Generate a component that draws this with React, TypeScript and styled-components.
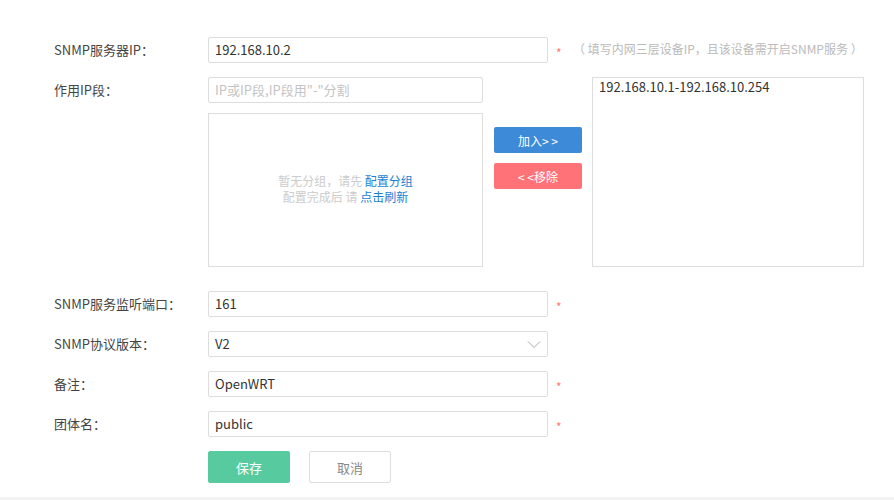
import React from 'react';
import styled, { createGlobalStyle } from 'styled-components';

const GlobalStyle = createGlobalStyle`
    html, body {
        margin: 0;
        padding: 0;
        background: #f2f2f3;
    }
    body {
        font-family: "Noto Sans CJK SC", "Noto Sans", "Liberation Sans", sans-serif;
        font-size: 13px;
        color: #333;
    }
`;

const Page = styled.div`
    height: 497px;
    box-sizing: border-box;
    background: #fff;
    padding: 37px 0 0 54px;
`;

const Row = styled.div<{ gap?: number }>`
    display: flex;
    align-items: flex-start;
    margin-bottom: ${({ gap }) => (gap === undefined ? 14 : gap)}px;
`;

const Label = styled.div`
    width: 154px;
    flex: none;
    height: 26px;
    line-height: 26px;
    color: #444;
    font-size: 13px;
`;

const Input = styled.div<{ width?: number; placeholder?: boolean }>`
    position: relative;
    box-sizing: border-box;
    width: ${({ width }) => width || 340}px;
    height: 26px;
    line-height: 24px;
    border: 1px solid #ddd;
    border-radius: 2px;
    padding: 0 6px;
    font-size: 13px;
    color: ${({ placeholder }) => (placeholder ? '#c4c4c4' : '#333')};
    background: #fff;
`;

const Required = styled.span`
    width: 17px;
    margin-left: 8px;
    height: 26px;
    line-height: 32px;
    color: #f77;
    font-size: 12px;
`;

const Hint = styled.span`
    height: 26px;
    line-height: 24px;
    color: #bbb;
    font-size: 12px;
`;

const Chevron = styled.svg`
    position: absolute;
    right: 6px;
    top: 8px;
`;

const IpSection = styled.div`
    display: flex;
`;

const LeftColumn = styled.div`
    display: flex;
    flex-direction: column;
    gap: 10px;
`;

const GroupBox = styled.div`
    box-sizing: border-box;
    width: 275px;
    height: 154px;
    border: 1px solid #ddd;
    display: flex;
    flex-direction: column;
    align-items: center;
    justify-content: center;
    font-size: 12px;
    line-height: 16px;
    color: #ccc;
    padding-bottom: 2px;
`;

const Link = styled.a`
    color: #1a7fd2;
    text-decoration: none;
    cursor: pointer;
`;

const MoveButtons = styled.div`
    display: flex;
    flex-direction: column;
    gap: 10px;
    padding: 50px 10px 0 11px;
`;

const SmallButton = styled.button<{ color: string }>`
    width: 88px;
    height: 26px;
    border: none;
    border-radius: 2px;
    background: ${({ color }) => color};
    color: #fff;
    font-family: inherit;
    font-size: 12px;
    padding: 0;
    cursor: pointer;
`;

const ListBox = styled.div`
    box-sizing: border-box;
    width: 272px;
    height: 190px;
    border: 1px solid #ddd;
    padding: 0 6px;
    font-size: 13px;
    line-height: 18px;
    color: #333;
`;

const ActionButton = styled.button<{ primary?: boolean }>`
    box-sizing: border-box;
    width: 82px;
    height: 32px;
    margin-right: 19px;
    border-radius: 2px;
    border: 1px solid ${({ primary }) => (primary ? '#57cb9f' : '#ddd')};
    background: ${({ primary }) => (primary ? '#57cb9f' : '#fff')};
    color: ${({ primary }) => (primary ? '#fff' : '#888')};
    font-family: inherit;
    font-size: 13px;
    cursor: pointer;
`;

const Spacer = styled.div`
    width: 154px;
    flex: none;
`;

export default function App() {
    return (
        <>
            <GlobalStyle />
            <Page>
                <Row>
                    <Label>SNMP服务器IP：</Label>
                    <Input>192.168.10.2</Input>
                    <Required>*</Required>
                    <Hint>（ 填写内网三层设备IP，且该设备需开启SNMP服务 ）</Hint>
                </Row>
                <Row gap={24}>
                    <Label>作用IP段：</Label>
                    <IpSection>
                        <LeftColumn>
                            <Input width={275} placeholder>IP或IP段,IP段用"-"分割</Input>
                            <GroupBox>
                                <div>暂无分组，请先 <Link>配置分组</Link></div>
                                <div>配置完成后 请 <Link>点击刷新</Link></div>
                            </GroupBox>
                        </LeftColumn>
                        <MoveButtons>
                            <SmallButton color="#3d8bd8">加入&gt; &gt;</SmallButton>
                            <SmallButton color="#ff7278">&lt; &lt;移除</SmallButton>
                        </MoveButtons>
                        <ListBox>192.168.10.1-192.168.10.254</ListBox>
                    </IpSection>
                </Row>
                <Row>
                    <Label>SNMP服务监听端口：</Label>
                    <Input>161</Input>
                    <Required>*</Required>
                </Row>
                <Row>
                    <Label>SNMP协议版本：</Label>
                    <Input>
                        V2
                        <Chevron width="14" height="9" viewBox="0 0 14 9">
                            <path d="M1 1.5 L7 7.5 L13 1.5" fill="none" stroke="#aaa" strokeWidth="1" />
                        </Chevron>
                    </Input>
                </Row>
                <Row>
                    <Label>备注：</Label>
                    <Input>OpenWRT</Input>
                    <Required>*</Required>
                </Row>
                <Row>
                    <Label>团体名：</Label>
                    <Input>public</Input>
                    <Required>*</Required>
                </Row>
                <Row>
                    <Spacer />
                    <ActionButton primary>保存</ActionButton>
                    <ActionButton>取消</ActionButton>
                </Row>
            </Page>
        </>
    );
}
